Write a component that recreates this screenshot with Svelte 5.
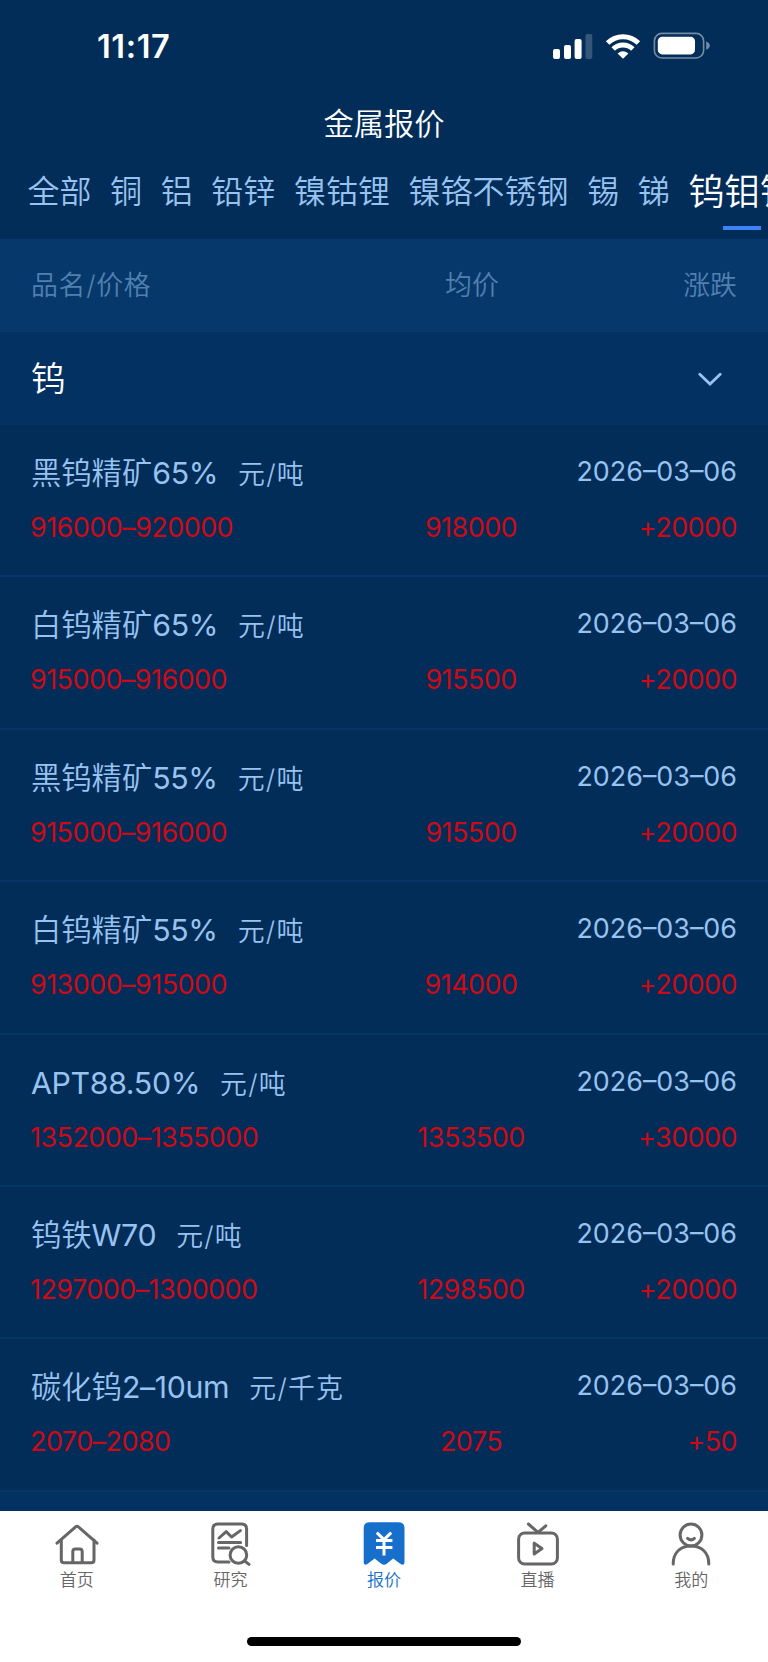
<script>
  const tabs = ['全部', '铜', '铝', '铅锌', '镍钴锂', '镍铬不锈钢', '锡', '锑', '钨钼钒'];
  let activeTab = $state('钨钼钒');
  let open = $state(true);

  const date = '2026–03–06';

  const rows = [
    { name: '黑钨精矿', grade: '65%', unit: '元/吨', price: '916000–920000', avg: '918000', change: '+20000' },
    { name: '白钨精矿', grade: '65%', unit: '元/吨', price: '915000–916000', avg: '915500', change: '+20000' },
    { name: '黑钨精矿', grade: '55%', unit: '元/吨', price: '915000–916000', avg: '915500', change: '+20000' },
    { name: '白钨精矿', grade: '55%', unit: '元/吨', price: '913000–915000', avg: '914000', change: '+20000' },
    { name: '', grade: 'APT88.50%', unit: '元/吨', price: '1352000–1355000', avg: '1353500', change: '+30000' },
    { name: '钨铁', grade: 'W70', unit: '元/吨', price: '1297000–1300000', avg: '1298500', change: '+20000' },
    { name: '碳化钨', grade: '2–10um', unit: '元/千克', price: '2070–2080', avg: '2075', change: '+50' }
  ];

  const nav = [
    { id: 'home', label: '首页' },
    { id: 'research', label: '研究' },
    { id: 'quote', label: '报价' },
    { id: 'live', label: '直播' },
    { id: 'me', label: '我的' }
  ];
  let page = $state('quote');
</script>

<div class="app">
  <header>
    <div class="status">
      <span class="time">11:17</span>
      <svg width="158" height="28" viewBox="0 0 158 28">
        <g fill="#fff">
          <rect x="1" y="17" width="7" height="10" rx="2" />
          <rect x="12" y="13" width="7" height="14" rx="2" />
          <rect x="22.6" y="7" width="7" height="20" rx="2" />
          <rect x="33.5" y="2" width="6.8" height="25" rx="2" opacity="0.2" />
        </g>
        <g fill="none" stroke="#fff" stroke-width="5">
          <path d="M55.6 11 A22 22 0 0 1 86.4 11" />
          <path d="M61.2 17 A14 14 0 0 1 80.8 17" />
        </g>
        <path d="M71 26.8 L65.6 21.6 Q71 17 76.4 21.6 Z" fill="#fff" />
        <rect x="102.4" y="1.4" width="49.2" height="24.6" rx="7.5" fill="none" stroke="#fff" stroke-opacity="0.45" stroke-width="1.6" />
        <rect x="105.8" y="4.8" width="37.2" height="17.6" rx="4.5" fill="#fff" />
        <path d="M154.2 9.4 Q157.8 10.8 157.8 13.6 Q157.8 16.4 154.2 17.8 Z" fill="#fff" opacity="0.45" />
      </svg>
    </div>

    <h1>金属报价</h1>

    <nav class="tabs">
      {#each tabs as tab}
        <button class:active={tab === activeTab} onclick={() => (activeTab = tab)}>{tab}</button>
      {/each}
    </nav>
  </header>

  <div class="columns">
    <span>品名/价格</span>
    <span>均价</span>
    <span>涨跌</span>
  </div>

  <button class="group" onclick={() => (open = !open)}>
    <span>钨</span>
    <svg class:closed={!open} width="24" height="14" viewBox="0 0 24 14">
      <path d="M1.8 2.2 L12 12 L22.2 2.2" />
    </svg>
  </button>

  <main>
    {#if open}
      {#each rows as row}
        <div class="row">
          <div class="top">
            <span class="name">{row.name}<span class="grade">{row.grade}</span></span>
            <span class="unit">{row.unit}</span>
            <span class="date">{date}</span>
          </div>
          <div class="values">
            <span>{row.price}</span>
            <span>{row.avg}</span>
            <span>{row.change}</span>
          </div>
        </div>
      {/each}
    {/if}
  </main>

  <footer>
    <nav class="bar">
      {#each nav as item}
        <button class:active={item.id === page} onclick={() => (page = item.id)}>
          <svg width="44" height="45" viewBox="0 0 44 45">
            {#if item.id === 'home'}
              <path d="M2 22.2 L20.6 5.8 Q22 4.6 23.4 5.8 L42 22.2" />
              <path d="M6.3 19 V39 Q6.3 41.8 9 41.8 H36.2 Q39 41.8 39 39 V19" />
              <path d="M17.8 41 V30.6 Q17.8 28 20.4 28 H24.6 Q27.2 28 27.2 30.6 V41" />
            {:else if item.id === 'research'}
              <path d="M21 41 H10 Q4.8 41 4.8 36 V8 Q4.8 3 10 3 H33.6 Q38.6 3 38.6 8 V24.4" />
              <path d="M11 17 L18.2 10.6 L23.6 16 L32.4 9.6" />
              <path d="M10.5 21.6 H32.6 M10.5 26.9 H21" />
              <circle cx="30.4" cy="34" r="8.3" />
              <path d="M36.4 39.8 L41 43.4" />
            {:else if item.id === 'quote'}
              <path class="solid" d="M1.7 7 Q1.7 1.2 7.6 1.2 H36.4 Q42.5 1.2 42.5 7 V41 Q42.5 45 38.6 43 L31.2 37.4 L24.4 43 Q22 44.6 19.6 43 L12.6 37.4 L5.4 43 Q1.7 45 1.7 41 Z" />
              <path class="yen" d="M14.8 11.6 L22 18.6 L29.2 11.6 M14 19.6 H30.4 M14 26.6 H30.4 M22 18.6 V34.4" />
            {:else if item.id === 'live'}
              <rect x="2.6" y="12" width="38.8" height="31" rx="6" />
              <path d="M12.4 3 L22 11.4 L29.8 4.8" />
              <path d="M18.2 22.2 V33 L26 27.6 Z" />
            {:else}
              <circle cx="22" cy="14" r="10.9" />
              <path d="M18.6 17.4 Q22 20.4 25.4 17.4" />
              <path d="M4.2 43 C4.2 31 12 25 22 25 C32 25 39.8 31 39.8 43" />
            {/if}
          </svg>
          <span>{item.label}</span>
        </button>
      {/each}
    </nav>
    <div class="indicator"></div>
  </footer>
</div>

<style>
  :global(body) {
    margin: 0;
    background: #022d58;
  }

  .app {
    width: 768px;
    height: 1662px;
    display: flex;
    flex-direction: column;
    overflow: hidden;
    background: #033161;
    color: #98c2f0;
    font-family: Inter, "Noto Sans CJK SC", sans-serif;
    font-weight: 350;
  }

  button {
    border: 0;
    padding: 0;
    margin: 0;
    background: none;
    color: inherit;
    font: inherit;
    cursor: pointer;
  }

  header {
    flex: none;
    height: 239px;
    background: #022d58;
  }

  .status {
    display: flex;
    justify-content: space-between;
    align-items: center;
    height: 92px;
    padding: 0 58px 0 97px;
    box-sizing: border-box;
    color: #fff;
  }

  .time {
    font-size: 32.5px;
    font-weight: 600;
    letter-spacing: 0.6px;
  }

  h1 {
    margin: 10px 0 0;
    line-height: 44px;
    font-size: 30.3px;
    font-weight: 350;
    text-align: center;
    color: #fff;
  }

  .tabs {
    display: flex;
    gap: 18.6px;
    height: 84px;
    padding: 0 0 0 27.5px;
    overflow: hidden;
  }

  .tabs button {
    position: relative;
    flex: none;
    height: 84px;
    padding-top: 8px;
    line-height: 76px;
    font-size: 32px;
  }

  .tabs .active {
    font-size: 35.8px;
    color: #fff;
  }

  .tabs .active::after {
    content: "";
    position: absolute;
    left: 50%;
    bottom: 0;
    width: 38px;
    height: 4px;
    margin-left: -19px;
    background: #3f82f7;
  }

  .columns,
  .values {
    display: grid;
    grid-template-columns: 346px 190px 1fr;
    padding: 0 31px;
  }

  .columns {
    flex: none;
    height: 93px;
    line-height: 92px;
    background: #06386b;
    color: #5180b0;
    font-size: 26.9px;
  }

  .columns span:first-child {
    letter-spacing: 0.7px;
  }

  .columns span:nth-child(2),
  .values span:nth-child(2) {
    text-align: center;
  }

  .columns span:nth-child(3),
  .values span:nth-child(3) {
    text-align: right;
  }

  .group {
    flex: none;
    display: flex;
    justify-content: space-between;
    align-items: center;
    height: 93px;
    padding: 0 46px 0 31px;
    color: #fff;
    font-size: 34.4px;
  }

  .group span {
    padding-bottom: 6px;
  }

  .group svg {
    fill: none;
    stroke: #98c2f0;
    stroke-width: 2.8;
    stroke-linecap: round;
  }

  .group .closed {
    transform: rotate(180deg);
  }

  main {
    flex: 1;
    overflow: hidden;
  }

  .row {
    height: 152.4px;
    padding-top: 28px;
    box-sizing: border-box;
    border-bottom: 2px solid #063668;
    background: #022d58;
  }

  .top {
    display: flex;
    height: 44px;
    padding: 0 31px;
    line-height: 41px;
  }

  .name {
    font-size: 30.3px;
  }

  .grade {
    font-weight: 400;
    letter-spacing: -0.35px;
  }

  .unit {
    margin-left: 20px;
    font-size: 26.9px;
    line-height: 42px;
    letter-spacing: 1.2px;
  }

  .date {
    margin-left: auto;
    font-size: 26.9px;
    font-weight: 400;
    line-height: 37px;
  }

  .values {
    margin-left: -1px;
    line-height: 60px;
    font-size: 26.9px;
    font-weight: 400;
    letter-spacing: -0.5px;
    color: #cc0a17;
  }

  footer {
    flex: none;
    height: 151px;
    background: #fff;
  }

  .bar {
    display: flex;
    height: 126px;
  }

  .bar button {
    flex: 1;
    display: flex;
    flex-direction: column;
    align-items: center;
    padding-top: 10px;
    color: #666;
    font-size: 17px;
    font-weight: 350;
  }

  .bar span {
    line-height: 26px;
    margin-top: 1px;
  }

  .bar svg {
    fill: none;
    stroke: currentColor;
    stroke-width: 3;
    stroke-linecap: round;
    stroke-linejoin: round;
  }

  .bar .active {
    color: #186ecb;
  }

  .bar .solid {
    fill: currentColor;
    stroke: none;
  }

  .bar .yen {
    stroke: #fff;
    stroke-width: 3;
    stroke-linecap: butt;
  }

  .indicator {
    width: 274px;
    height: 9px;
    margin: 0 auto;
    border-radius: 5px;
    background: #000;
  }
</style>
